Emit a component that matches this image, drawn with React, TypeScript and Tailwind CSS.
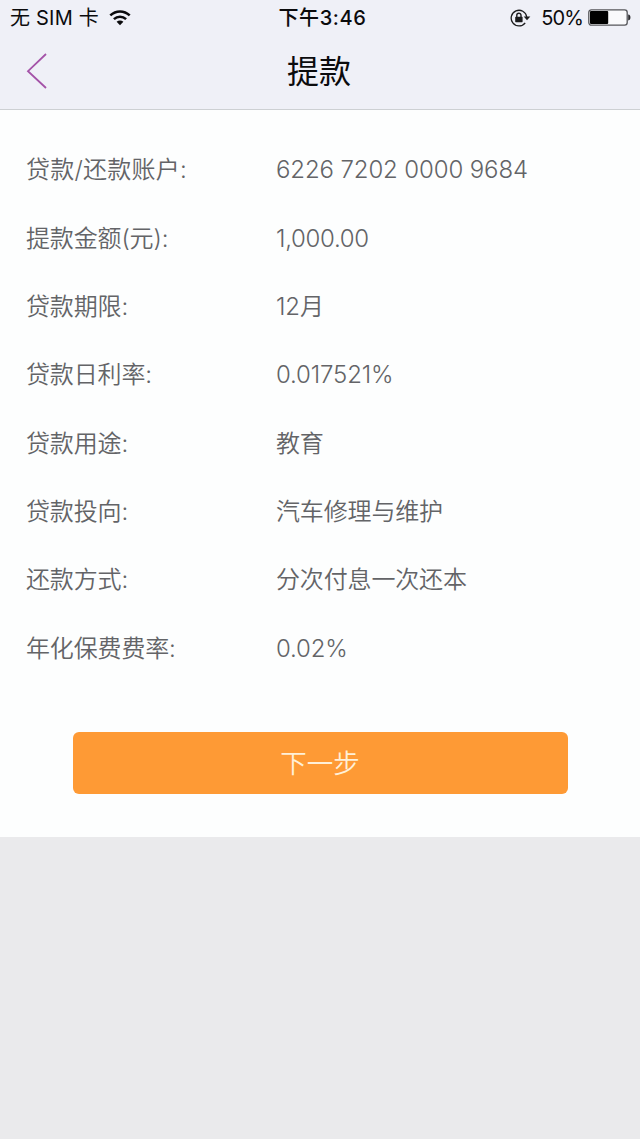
import React from "react";

interface IDetail {
	label: string;
	value: string;
	labelClass?: string;
	valueClass: string;
}

const details: IDetail[] = [
	{
		label: "贷款/还款账户:",
		value: "6226 7202 0000 9684",
		labelClass: "tracking-[0.25px]",
		valueClass: "tracking-[-0.12px]",
	},
	{ label: "提款金额(元):", value: "1,000.00", valueClass: "tracking-[-0.3px]" },
	{ label: "贷款期限:", value: "12月", valueClass: "tracking-[-0.15px]" },
	{ label: "贷款日利率:", value: "0.017521%", valueClass: "tracking-[-0.15px]" },
	{ label: "贷款用途:", value: "教育", valueClass: "tracking-[-0.15px]" },
	{
		label: "贷款投向:",
		value: "汽车修理与维护",
		valueClass: "tracking-[-0.15px]",
	},
	{
		label: "还款方式:",
		value: "分次付息一次还本",
		valueClass: "tracking-[-0.15px]",
	},
	{ label: "年化保费费率:", value: "0.02%", valueClass: "tracking-[-0.15px]" },
];

const WifiIcon = () => (
	<svg width="22" height="16" viewBox="0 0 22 16" fill="none">
		<path d="M1.3 5.4C7 .1 15 .1 20.7 5.4" stroke="#0b0b0d" strokeWidth="2.6" />
		<path d="M4.9 9.1c3.6-3.2 8.6-3.2 12.2 0" stroke="#0b0b0d" strokeWidth="2.6" />
		<path d="M7.6 11.7c2-1.7 4.8-1.7 6.8 0L11 15.2z" fill="#0b0b0d" />
	</svg>
);

const RotationLockIcon = () => (
	<svg width="21" height="18" viewBox="0 0 21 18" fill="none">
		<path
			d="M15.2 13.8A7.8 7.8 0 1 1 16.7 8"
			stroke="#1c1c1e"
			strokeWidth="1.3"
		/>
		<path d="M13.7 7.4h6.6L17 11.2z" fill="#1c1c1e" />
		<rect x="5.2" y="7.8" width="7.4" height="5.4" rx=".6" fill="#1c1c1e" />
		<path d="M6.8 8V6.3a2.1 2.1 0 0 1 4.2 0V8" stroke="#1c1c1e" strokeWidth="1.4" />
	</svg>
);

const BatteryIcon = () => (
	<svg width="43" height="18" viewBox="0 0 43 18" fill="none">
		<rect x=".8" y=".8" width="38.4" height="15.4" rx="2.6" fill="#fafafc" stroke="#55565a" strokeWidth="1.3" />
		<rect x="2" y="2" width="18.2" height="13" rx="1" fill="#000" />
		<path d="M40.2 5.6c1.7.3 2.2 1.3 2.2 2.9s-.5 2.6-2.2 2.9z" fill="#2b2b2e" />
	</svg>
);

const StatusBar = () => (
	<div className="grid h-[35px] grid-cols-3 items-center pl-[10px] pr-[9px] text-[#0b0b0d]">
		<div className="flex items-center gap-[10px]">
			<span className="pt-px text-[20px] leading-[35px] tracking-[0.2px]">
				无 SIM 卡
			</span>
			<WifiIcon />
		</div>
		<div className="pl-[4px] pt-px text-center text-[20px] font-medium leading-[35px] tracking-[0.65px]">
			下午3:46
		</div>
		<div className="flex items-center justify-end">
			<RotationLockIcon />
			<span className="ml-[10px] mr-[5px] pt-px text-[20px] leading-[35px] tracking-[-0.9px]">
				50%
			</span>
			<BatteryIcon />
		</div>
	</div>
);

const NavBar = () => (
	<div className="grid h-[74px] grid-cols-3 items-center">
		<button className="pb-[3px] pl-[26px]" aria-label="返回">
			<svg width="22" height="36" viewBox="0 0 22 36" fill="none">
				<path d="M20 1 2 18.2 20 35" stroke="#a453a8" strokeWidth="1.8" />
			</svg>
		</button>
		<h1 className="pr-[2px] text-center text-[32px] leading-[72px] text-[#0b0b0d]">
			提款
		</h1>
	</div>
);

export default function App() {
	return (
		<div className="flex h-[1139px] w-[640px] flex-col overflow-hidden bg-[#eaeaec] font-['Inter','Noto_Sans_CJK_SC',sans-serif]">
			<header className="h-[110px] border-b border-[#cdd0d3] bg-[#eff0f7]">
				<StatusBar />
				<NavBar />
			</header>

			<main className="h-[727px] bg-[#fdfefe] pt-[26px]">
				<dl className="text-[24px] font-[350] text-[#636467]">
					{details.map((item) => (
						<div
							key={item.label}
							className="flex h-[68.36px] items-center pl-[26px]"
						>
							<dt
								className={`w-[250px] shrink-0 ${item.labelClass ?? "tracking-[-0.15px]"}`}
							>
								{item.label}
							</dt>
							<dd className={item.valueClass}>{item.value}</dd>
						</div>
					))}
				</dl>
				<button className="mx-auto mt-[49px] flex h-[62px] w-[495px] items-center justify-center rounded-[6px] bg-[#fe9a35] pt-px text-[26.5px] font-[350] text-[#fff0d8]">
					下一步
				</button>
			</main>
		</div>
	);
}
